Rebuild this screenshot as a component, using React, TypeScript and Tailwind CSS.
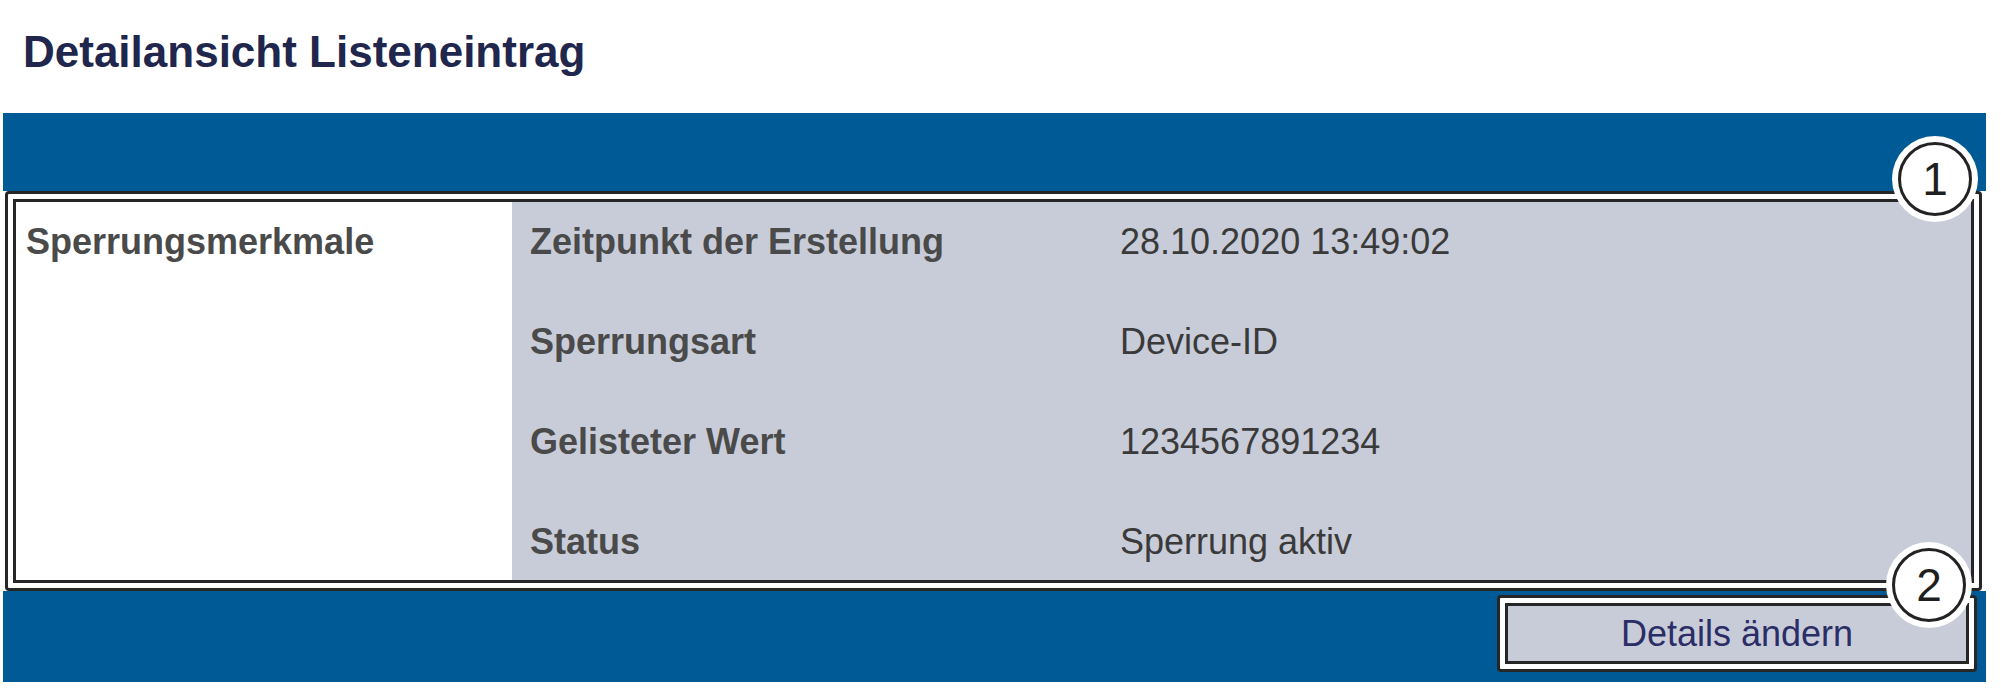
const rows = [
  { label: "Zeitpunkt der Erstellung", value: "28.10.2020 13:49:02" },
  { label: "Sperrungsart", value: "Device-ID" },
  { label: "Gelisteter Wert", value: "1234567891234" },
  { label: "Status", value: "Sperrung aktiv" },
];

function Marker({ n, className }: { n: number; className: string }) {
  return (
    <div
      className={`absolute w-[74px] h-[74px] rounded-full bg-white border-[3px] border-[#232323] shadow-[0_0_0_6px_#ffffff] flex items-center justify-center text-[46px] leading-none text-[#1f1f1f] ${className}`}
    >
      {n}
    </div>
  );
}

export default function App() {
  return (
    <div className="relative w-[2001px] h-[693px] bg-white font-['Liberation_Sans',Arial,sans-serif]">
      <h1 className="pl-[23px] pt-[30px] text-[44px] leading-none font-bold text-[#20264c]">
        Detailansicht Listeneintrag
      </h1>

      <div className="mt-[39px] ml-[3px] w-[1983px] h-[78px] bg-[#005a96]" />

      <div className="ml-[5px] w-[1977px] h-[400px] border-[3px] border-[#262626] rounded-[4px] bg-white p-[5px]">
        <div className="h-full flex border-[3px] border-[#262626]">
          <div className="w-[496px] pl-[10px] pt-[20px] text-[36px] leading-[40px] font-bold text-[#4a4a4a]">
            Sperrungsmerkmale
          </div>
          <div className="flex-1 bg-[#c8ccd8] pl-[18px] pt-[20px] flex flex-col gap-[60px]">
            {rows.map((r) => (
              <div key={r.label} className="grid grid-cols-[590px_1fr] text-[36px] leading-[40px]">
                <span className="font-bold text-[#4a4a4a]">{r.label}</span>
                <span className="text-[#3a3a3a]">{r.value}</span>
              </div>
            ))}
          </div>
        </div>
      </div>

      <div className="ml-[3px] w-[1983px] h-[91px] bg-[#005a96] flex justify-end items-start pt-[4px] pr-[9px]">
        <button className="w-[480px] h-[77px] border-[3px] border-[#262626] rounded-[4px] bg-white p-[5px]">
          <div className="h-full flex items-center justify-center border-[3px] border-[#262626] bg-[#c8ccd8] text-[36px] text-[#2b2d66]">
            Details ändern
          </div>
        </button>
      </div>

      <Marker n={1} className="left-[1898px] top-[142px]" />
      <Marker n={2} className="left-[1892px] top-[548px]" />
    </div>
  );
}
